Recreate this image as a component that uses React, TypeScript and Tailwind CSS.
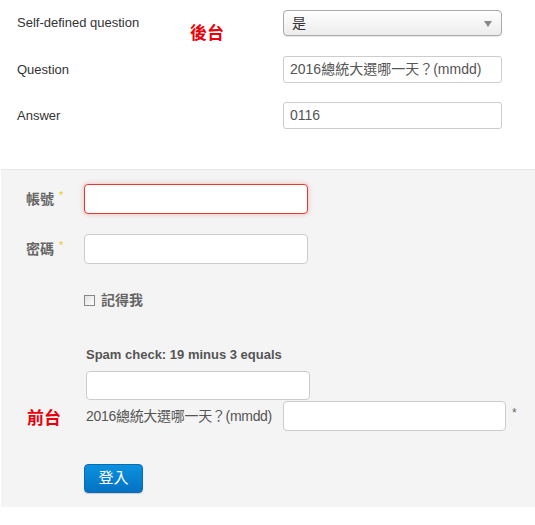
import React from "react";

const font = { fontFamily: '"Liberation Sans", Arial, "Noto Sans CJK TC", sans-serif' };

export default function App() {
  return (
    <div className="relative w-[535px] h-[525px] bg-white text-[13px]" style={font}>
      {/* Back-end section */}
      <div className="relative pt-[10px] h-[169px]">
        <div className="flex items-center h-[26px]">
          <div className="w-[283px] pl-[17px] text-[#333]">Self-defined question</div>
          <div className="relative w-[219px] h-[26px] rounded-[4px] border border-[#aaa] bg-gradient-to-b from-white to-[#ececec] shadow-[0_1px_1px_rgba(0,0,0,0.1)] flex items-center pl-[8px] text-[#333]">
            <span className="text-[14px]">是</span>
            <span className="absolute right-[9px] top-[10px] w-0 h-0 border-l-[4px] border-r-[4px] border-t-[6px] border-l-transparent border-r-transparent border-t-[#888]" />
          </div>
        </div>
        <div className="flex items-center h-[27px] mt-[20px]">
          <div className="w-[283px] pl-[17px] text-[#333]">Question</div>
          <div className="w-[219px] h-[27px] rounded-[3px] border border-[#ccc] bg-white flex items-center pl-[6px] text-[14px] text-[#555]">
            2016總統大選哪一天？(mmdd)
          </div>
        </div>
        <div className="flex items-center h-[27px] mt-[19px]">
          <div className="w-[283px] pl-[17px] text-[#333]">Answer</div>
          <div className="w-[219px] h-[27px] rounded-[3px] border border-[#ccc] bg-white flex items-center pl-[6px] text-[14px] text-[#555]">
            0116
          </div>
        </div>
        <div className="absolute left-[190px] top-[19px] text-[17px] font-bold text-[#e8000b]" style={{ fontFamily: '"Noto Sans CJK TC", sans-serif' }}>
          後台
        </div>
      </div>

      {/* Front-end section */}
      <div className="relative ml-[1px] h-[338px] bg-[#f4f4f4] border-t border-[#e6e6e6] pt-[14px]">
        <div className="flex items-center h-[30px]">
          <div className="w-[83px] pl-[25px] flex items-start">
            <span className="font-bold text-[14px] text-[#666]">帳號</span>
            <span className="text-[#f0c419] text-[11px] ml-[5px] -mt-[2px]">*</span>
          </div>
          <div className="w-[224px] h-[30px] rounded-[4px] border border-[#e53935] bg-white shadow-[0_0_5px_rgba(229,57,53,0.35)]" />
        </div>
        <div className="flex items-center h-[30px] mt-[20px]">
          <div className="w-[83px] pl-[25px] flex items-start">
            <span className="font-bold text-[14px] text-[#666]">密碼</span>
            <span className="text-[#f0c419] text-[11px] ml-[5px] -mt-[2px]">*</span>
          </div>
          <div className="w-[224px] h-[30px] rounded-[4px] border border-[#ccc] bg-white" />
        </div>
        <div className="flex items-center h-[14px] mt-[29px] pl-[83px]">
          <span className="w-[11px] h-[11px] border border-[#888] bg-gradient-to-br from-[#e2e2e2] to-white" />
          <span className="ml-[6px] font-bold text-[14px] text-[#666]">記得我</span>
        </div>
        <div className="pl-[85px] mt-[40px] font-bold text-[13px] text-[#555] leading-[16px]">
          Spam check: 19 minus 3 equals
        </div>
        <div className="pl-[85px] mt-[8px]">
          <div className="w-[224px] h-[29px] rounded-[4px] border border-[#ccc] bg-white" />
        </div>
        <div className="flex items-center pl-[85px] h-[30px] mt-[1px]">
          <span className="w-[197px] text-[14px] text-[#555] tracking-[-0.3px]">2016總統大選哪一天？(mmdd)</span>
          <div className="w-[223px] h-[30px] rounded-[4px] border border-[#ccc] bg-white" />
          <span className="ml-[6px] text-[12px] text-[#666] -mt-[6px]">*</span>
        </div>
        <div className="pl-[83px] mt-[33px]">
          <button className="w-[59px] h-[29px] rounded-[4px] bg-gradient-to-b from-[#0b91df] to-[#0572c2] border border-[#0a6ab3] text-white text-[15px] shadow-[0_1px_1px_rgba(0,0,0,0.15)]">
            登入
          </button>
        </div>
        <div className="absolute left-[26px] top-[234px] text-[17px] font-bold text-[#e8000b]" style={{ fontFamily: '"Noto Sans CJK TC", sans-serif' }}>
          前台
        </div>
      </div>
    </div>
  );
}
